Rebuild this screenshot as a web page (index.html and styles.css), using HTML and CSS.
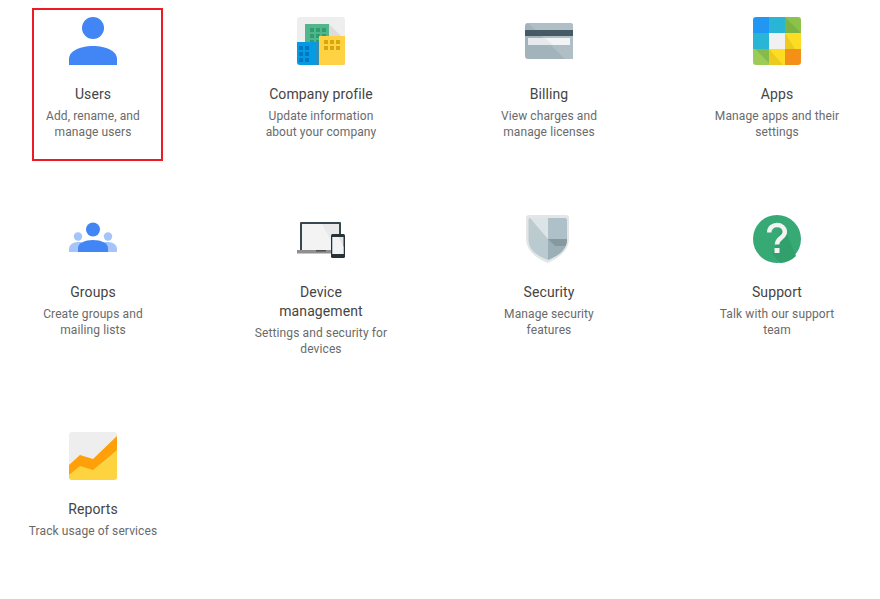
FILE: index.html
```html
<!DOCTYPE html>
<html lang="en">
<head>
<meta charset="utf-8">
<title>Admin console</title>
<link rel="stylesheet" href="styles.css">
</head>
<body>
<main class="grid">
  <a class="tile tile-selected">
    <svg class="icon" viewBox="0 0 48 48"><circle cx="24" cy="11" r="11" fill="#4285f4"/><path d="M0 48v-6C0 34 11 29 24 29s24 5 24 13v6z" fill="#4285f4"/></svg>
    <h2 class="title">Users</h2>
    <p class="desc">Add, rename, and manage users</p>
  </a>
  <a class="tile">
    <svg class="icon" viewBox="0 0 48 48">
      <rect width="48" height="48" rx="3" fill="#eeeeee"/>
      <path d="M32 7l16 16v25H32z" fill="#dcdcdc"/>
      <rect x="8" y="7" width="24" height="41" fill="#53b58b"/>
      <path d="M13 11h4v4h-4zM19 11h4v4h-4zM25 11h4v4h-4zM13 17h4v4h-4zM19 17h4v4h-4zM25 17h4v4h-4zM13 23h4v4h-4zM19 23h4v4h-4z" fill="#2f9e6e"/>
      <rect x="18" y="25" width="4" height="23" fill="#2c8fb8"/>
      <path d="M0 25h18v23H3a3 3 0 0 1-3-3z" fill="#039be5"/>
      <path d="M2 29h4v4H2zM8 29h4v4H8zM2 35h4v4H2zM8 35h4v4H8zM2 41h4v4H2zM8 41h4v4H8z" fill="#0277bd"/>
      <path d="M22 19h26v26a3 3 0 0 1-3 3H22z" fill="#ffd243"/>
      <path d="M27 23h4v4h-4zM33 23h4v4h-4zM39 23h4v4h-4zM27 29h4v4h-4zM33 29h4v4h-4zM39 29h4v4h-4z" fill="#d9a50c"/>
    </svg>
    <h2 class="title">Company profile</h2>
    <p class="desc">Update information about your company</p>
  </a>
  <a class="tile">
    <svg class="icon" viewBox="0 0 48 48">
      <rect y="6" width="48" height="36" rx="3" fill="#a3b3bb"/>
      <path d="M3 6h42a3 3 0 0 1 3 3v33H40z" fill="#b0bec5"/>
      <rect y="13" width="48" height="6" fill="#455a64"/>
      <rect x="3" y="21" width="42" height="7" fill="#e6eaec"/>
      <path d="M20 21h25v7H28z" fill="#f2f4f5"/>
    </svg>
    <h2 class="title">Billing</h2>
    <p class="desc">View charges and manage licenses</p>
  </a>
  <a class="tile">
    <svg class="icon" viewBox="0 0 48 48">
      <path d="M3 0h13v16H0V3a3 3 0 0 1 3-3z" fill="#2196f3"/>
      <rect x="16" width="16" height="16" fill="#29b6d6"/>
      <path d="M32 0h13a3 3 0 0 1 3 3v13H32z" fill="#8bc34a"/>
      <path d="M32 0v16h16z" fill="#7cb342"/>
      <rect y="16" width="16" height="16" fill="#29b6d6"/>
      <rect x="16" y="16" width="16" height="16" fill="#f1f1f1"/>
      <rect x="32" y="16" width="16" height="16" fill="#fddd22"/>
      <path d="M32 16v16h10z" fill="#ebcb1e"/>
      <path d="M0 32h16v16H3a3 3 0 0 1-3-3z" fill="#9ccc55"/>
      <path d="M2 32h14v14z" fill="#85bb4d"/>
      <rect x="16" y="32" width="16" height="16" fill="#fddd22"/>
      <path d="M16 32v16h14z" fill="#ebcb1e"/>
      <path d="M32 32h16v13a3 3 0 0 1-3 3H32z" fill="#f48f17"/>
    </svg>
    <h2 class="title">Apps</h2>
    <p class="desc">Manage apps and their settings</p>
  </a>
  <a class="tile">
    <svg class="icon" viewBox="0 0 48 48">
      <circle cx="9" cy="21.500" r="4.200" fill="#a4c4fa"/>
      <circle cx="39" cy="21.500" r="4.200" fill="#a4c4fa"/>
      <path d="M0 37v-3c0-4 4-7 9-7s15 2 15 10z" fill="#a4c4fa"/>
      <path d="M48 37v-3c0-4-4-7-9-7s-15 2-15 10z" fill="#a4c4fa"/>
      <circle cx="24" cy="14.500" r="7" fill="#4285f4"/>
      <path d="M9 37v-4c0-5 7-8 15-8s15 3 15 8v4z" fill="#4285f4"/>
    </svg>
    <h2 class="title">Groups</h2>
    <p class="desc">Create groups and mailing lists</p>
  </a>
  <a class="tile">
    <svg class="icon" viewBox="0 0 48 48">
      <path d="M3 35V8a1 1 0 0 1 1-1h39a1 1 0 0 1 1 1v27z" fill="#37474f"/>
      <rect x="5" y="9" width="37" height="26" fill="#e9e9e9"/>
      <path d="M5 9h20l14 26H5z" fill="#f3f3f3"/>
      <rect y="35" width="36" height="3.500" fill="#8f8f8f"/>
      <rect x="19" y="35" width="10" height="1.500" fill="#515151"/>
      <rect x="34" y="19" width="14" height="24" rx="1.500" fill="#263238"/>
      <rect x="35.500" y="22" width="11" height="17" fill="#e4e4e4"/>
      <path d="M35.500 22h6l5 10v7h-11z" fill="#f3f3f3"/>
    </svg>
    <h2 class="title">Device management</h2>
    <p class="desc">Settings and security for devices</p>
  </a>
  <a class="tile">
    <svg class="icon" viewBox="0 0 48 48">
      <path d="M4 0h37a3 3 0 0 1 3 3v20c0 14-12 21-21.500 25C13 44 1 37 1 23V3a3 3 0 0 1 3-3z" fill="#e3e5e6"/>
      <path d="M5 3h18v21H3.500V5A2 2 0 0 1 5 3z" fill="#bccbd0"/>
      <path d="M5 3h18v21z" fill="#dbe4e7"/>
      <path d="M23 3h17a2 2 0 0 1 2 2v19H23z" fill="#afc1c8"/>
      <path d="M3.500 24H23v21C13 41 3.500 36 3.500 24z" fill="#b9cbd1"/>
      <path d="M23 24h19c0 12-9.500 17-19 21z" fill="#9aafb7"/>
      <path d="M23 24h19c0 3-.5 5-1.500 7H30z" fill="#85999f"/>
    </svg>
    <h2 class="title">Security</h2>
    <p class="desc">Manage security features</p>
  </a>
  <a class="tile">
    <svg class="icon" viewBox="0 0 48 48">
      <circle cx="24" cy="24" r="24" fill="#36a975"/>
      <path d="M31 12l12 29a24 24 0 0 1-16 7L19 38l6-10 1-8z" fill="#31a06b"/>
      <path d="M16.200 17.500c0-4.700 3.600-7.500 7.800-7.500s7.800 2.800 7.800 7c0 5.800-7.800 6-7.800 12.500" fill="none" stroke="#f3f3f3" stroke-width="4.500"/>
      <rect x="21.500" y="33" width="5" height="5" fill="#f3f3f3"/>
    </svg>
    <h2 class="title">Support</h2>
    <p class="desc">Talk with our support team</p>
  </a>
  <a class="tile">
    <svg class="icon" viewBox="0 0 48 48">
      <rect width="48" height="48" rx="3" fill="#eeeeee"/>
      <path d="M0 33l11-10 13 4L48 4v30L24 40 11 36 0 43z" fill="#ff9f0a"/>
      <path d="M0 43l11-9 13 4 24-20v27a3 3 0 0 1-3 3H3a3 3 0 0 1-3-3z" fill="#fdd440"/>
    </svg>
    <h2 class="title">Reports</h2>
    <p class="desc">Track usage of services</p>
  </a>
</main>
</body>
</html>
```
FILE: styles.css
```css
html, body {
  margin: 0;
  padding: 0;
  background: #fff;
}

body {
  font-family: Roboto, "Liberation Sans", sans-serif;
}

.grid {
  display: grid;
  grid-template-columns: repeat(4, 134px);
  column-gap: 94px;
  row-gap: 75px;
  padding: 17px 0 0 26px;
}

.tile {
  position: relative;
  display: block;
  text-align: center;
}

.tile-selected::after {
  content: "";
  position: absolute;
  left: 6px;
  top: -9px;
  width: 127px;
  height: 149px;
  border: 2px solid #ed1c24;
}

.icon {
  display: block;
  width: 48px;
  height: 48px;
  margin: 0 auto 20px;
}

.title {
  margin: 0 auto 4px;
  max-width: 126px;
  font-size: 14px;
  font-weight: 400;
  line-height: 19px;
  letter-spacing: 0.1px;
  color: #444;
}

.desc {
  margin: 0;
  font-size: 12px;
  line-height: 16px;
  letter-spacing: 0.1px;
  color: #6a6a6a;
}
```
